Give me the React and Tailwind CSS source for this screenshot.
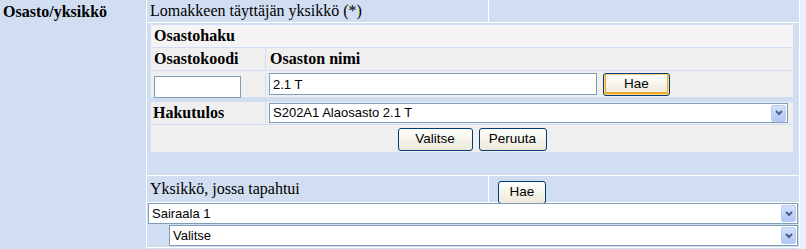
import React from 'react';

const serif = "font-['Liberation_Serif','Times_New_Roman',serif] text-[#000]";
const sans = "font-['Liberation_Sans',Arial,sans-serif] text-[13px] text-black";

function Arrow() {
  return (
    <span className="w-[15px] h-[17px] mr-[1px] flex items-center justify-center rounded-[2px] border border-[#b9cdf5] bg-linear-to-b from-[#d4e1fc] to-[#b2c7f5]">
      <svg width="8" height="6" viewBox="0 0 8 6">
        <path d="M1 1 L4 4 L7 1" stroke="#4d6185" strokeWidth="2" fill="none" />
      </svg>
    </span>
  );
}

function Select({ value, className }) {
  return (
    <div className={`flex items-center bg-white border border-[#7f9db9] ${className}`}>
      <span className={`flex-1 pl-[3px] ${sans}`}>{value}</span>
      <Arrow />
    </div>
  );
}

function Button({ children, primary, className }) {
  return (
    <button
      className={`h-[23px] rounded-[3px] border border-[#003c74] bg-linear-to-b from-white to-[#ece9d8] font-['Liberation_Sans',Arial,sans-serif] text-[13.5px] text-black ${primary ? 'shadow-[inset_0_0_0_1px_#ffd88a,inset_0_-1px_0_2px_#f0a82c]' : ''} ${className}`}
    >
      {children}
    </button>
  );
}

export default function App() {
  return (
    <div className="w-[806px] h-[249px] flex bg-[#d1ddf0] overflow-hidden">
      <div className={`w-[147px] shrink-0 border-r border-white pl-[3px] font-bold text-[16px] leading-[23px] ${serif}`}>
        Osasto/yksikkö
      </div>

      <div className="w-[652px] shrink-0 flex flex-col">
        <div className="h-[23px] flex border-b border-white">
          <div className={`w-[342px] border-r border-white pl-[3px] text-[16px] leading-[22px] ${serif}`}>
            Lomakkeen täyttäjän yksikkö (*)
          </div>
          <div className="flex-1" />
        </div>

        <div className="h-[153px] border-b border-white pl-[4px] pr-[6px] pt-[2px]">
          <div className="bg-[#efefef]">
            <div className={`h-[23px] border-b border-[#d1ddf0] bg-[#f4f4f4] pl-[3px] font-bold text-[16px] leading-[22px] ${serif}`}>
              Osastohaku
            </div>
            <div className="h-[23px] flex border-b border-[#d1ddf0]">
              <div className={`w-[115px] border-r border-[#d1ddf0] pl-[3px] font-bold text-[16px] leading-[22px] ${serif}`}>
                Osastokoodi
              </div>
              <div className={`pl-[4px] font-bold text-[16px] leading-[22px] ${serif}`}>Osaston nimi</div>
            </div>
            <div className="h-[26px] flex pt-[2px]">
              <div className="w-[115px] border-r border-[#d1ddf0] pl-[3px]">
                <input className={`w-[87px] h-[22px] border border-[#7f9db9] bg-white px-[2px] ${sans}`} />
              </div>
              <div className="flex pl-[3px] gap-[6px]">
                <input
                  defaultValue="2.1 T"
                  className={`w-[328px] h-[22px] border border-[#7f9db9] bg-white px-[3px] ${sans}`}
                />
                <Button primary className="w-[67px]">Hae</Button>
              </div>
            </div>
          </div>

          <div className="mt-[5px] bg-[#efefef]">
            <div className="h-[23px] flex border-b border-[#d1ddf0]">
              <div className={`w-[115px] border-r border-[#d1ddf0] pl-[2px] font-bold text-[16px] leading-[22px] ${serif}`}>
                Hakutulos
              </div>
              <div className="pl-[3px] pt-[1px]">
                <Select value="S202A1 Alaosasto 2.1 T" className="w-[519px] h-[20px]" />
              </div>
            </div>
            <div className="h-[27px] flex justify-center gap-[6px] pt-[3px]">
              <Button className="w-[75px]">Valitse</Button>
              <Button className="w-[68px]">Peruuta</Button>
            </div>
          </div>
        </div>

        <div className="h-[27px] flex border-b border-white">
          <div className={`w-[342px] border-r border-white pl-[3px] text-[16px] leading-[25px] ${serif}`}>
            Yksikkö, jossa tapahtui
          </div>
          <div className="pl-[9px] pt-[2px]">
            <Button className="w-[48px] h-[22px]">Hae</Button>
          </div>
        </div>

        <div className="h-[45px] border-b border-white flex flex-col gap-[1px] pl-[1px] pr-[1px]">
          <Select value="Sairaala 1" className="w-[650px] h-[21px]" />
          <Select value="Valitse" className="ml-[21px] w-[629px] h-[21px]" />
        </div>
      </div>

      <div className="flex-1 border-l border-white bg-[#e9eef8]" />
    </div>
  );
}
